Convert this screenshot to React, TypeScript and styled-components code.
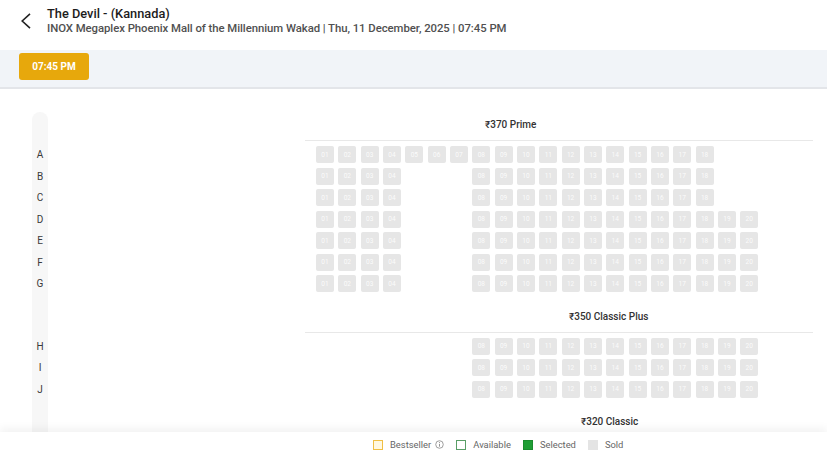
import * as React from 'react'
import styled, { createGlobalStyle } from 'styled-components'

// seat layout, one entry per block of the hall
interface IRow {
  letter: string
  seats: number[]
}
interface ISection {
  title: string
  titleIndent: number
  rows: IRow[]
}

const range = (from: number, to: number) => {
  const out: number[] = []
  for (let i = from; i <= to; i++) out.push(i)
  return out
}

const SECTIONS: ISection[] = [
  {
    title: '₹370 Prime',
    titleIndent: 180,
    rows: [
      { letter: 'A', seats: range(1, 18) },
      { letter: 'B', seats: [...range(1, 4), ...range(8, 18)] },
      { letter: 'C', seats: [...range(1, 4), ...range(8, 18)] },
      { letter: 'D', seats: [...range(1, 4), ...range(8, 20)] },
      { letter: 'E', seats: [...range(1, 4), ...range(8, 20)] },
      { letter: 'F', seats: [...range(1, 4), ...range(8, 20)] },
      { letter: 'G', seats: [...range(1, 4), ...range(8, 20)] },
    ],
  },
  {
    title: '₹350 Classic Plus',
    titleIndent: 264,
    rows: [
      { letter: 'H', seats: range(8, 20) },
      { letter: 'I', seats: range(8, 20) },
      { letter: 'J', seats: range(8, 20) },
    ],
  },
  {
    // rows of this block are below the fold
    title: '₹320 Classic',
    titleIndent: 276,
    rows: [],
  },
]

const pad = (n: number) => (n < 10 ? `0${n}` : `${n}`)

const GlobalStyle = createGlobalStyle`
  html, body {
    margin: 0;
    padding: 0;
    background: #ffffff;
  }
  body {
    font-family: Roboto, "Liberation Sans", Arial, sans-serif;
    color: #222;
  }
`

export default function App() {
  return (
    <Page>
      <GlobalStyle />
      <Header>
        <BackButton aria-label="back">
          <svg width="10" height="16" viewBox="0 0 10 16">
            <polyline points="9,0.8 1.2,8 9,15.2" fill="none" stroke="#222" strokeWidth="1.6" />
          </svg>
        </BackButton>
        <HeaderText>
          <Title>The Devil - (Kannada)</Title>
          <Subtitle>INOX Megaplex Phoenix Mall of the Millennium Wakad | Thu, 11 December, 2025 | 07:45 PM</Subtitle>
        </HeaderText>
      </Header>
      <ShowtimeBar>
        <ShowtimeButton>07:45 PM</ShowtimeButton>
      </ShowtimeBar>
      <SeatArea>
        <MapRow>
          <LetterStrip>
            {SECTIONS.map((s, si) => (
              <React.Fragment key={s.title}>
                <TitleSpacer $first={si === 0} />
                {s.rows.map(r => (
                  <Letter key={r.letter}>{r.letter}</Letter>
                ))}
              </React.Fragment>
            ))}
          </LetterStrip>
          <SeatColumn>
            {SECTIONS.map((s, si) => (
              <React.Fragment key={s.title}>
                <SectionTitle $first={si === 0}>
                  <SectionLabel $indent={s.titleIndent}>{s.title}</SectionLabel>
                </SectionTitle>
                {s.rows.map(r => (
                  <SeatRow key={r.letter}>
                    {r.seats.map(n => (
                      <Seat key={n} $col={n}>{pad(n)}</Seat>
                    ))}
                  </SeatRow>
                ))}
              </React.Fragment>
            ))}
          </SeatColumn>
        </MapRow>
      </SeatArea>
      <Legend>
        <LegendItem>
          <LegendBox $kind="bestseller" />
          <LegendText>Bestseller</LegendText>
          <InfoIcon width="9" height="9" viewBox="0 0 10 10">
            <circle cx="5" cy="5" r="4.2" fill="none" stroke="#888" strokeWidth="0.9" />
            <line x1="5" y1="4.4" x2="5" y2="7.4" stroke="#888" strokeWidth="1" />
            <circle cx="5" cy="2.9" r="0.6" fill="#888" />
          </InfoIcon>
        </LegendItem>
        <LegendItem>
          <LegendBox $kind="available" />
          <LegendText>Available</LegendText>
        </LegendItem>
        <LegendItem>
          <LegendBox $kind="selected" />
          <LegendText>Selected</LegendText>
        </LegendItem>
        <LegendItem>
          <LegendBox $kind="sold" />
          <LegendText>Sold</LegendText>
        </LegendItem>
      </Legend>
    </Page>
  )
}

const Page = styled.div`
  height: 100vh;
  display: flex;
  flex-direction: column;
  overflow: hidden;
`
const Header = styled.header`
  height: 50px;
  flex: none;
  box-sizing: border-box;
  padding: 6px 0 0 21px;
  display: flex;
  align-items: flex-start;
  background: #fff;
`
const BackButton = styled.div`
  width: 26px;
  height: 30px;
  display: flex;
  align-items: center;
`
const HeaderText = styled.div`
  display: flex;
  flex-direction: column;
`
const Title = styled.div`
  font-size: 12.8px;
  line-height: 15px;
  font-weight: 500;
  color: #1c1c1c;
`
const Subtitle = styled.div`
  font-size: 11.35px;
  line-height: 15px;
  font-weight: 500;
  color: #505050;
  letter-spacing: -0.05px;
`
const ShowtimeBar = styled.div`
  height: 39px;
  flex: none;
  box-sizing: border-box;
  padding: 3px 0 0 19px;
  background: #f1f4f8;
  border-bottom: 2px solid #e3e5e9;
`
const ShowtimeButton = styled.button`
  width: 70px;
  height: 27px;
  border: none;
  border-radius: 3px;
  background: #e7a80c;
  color: #fff;
  font-family: Roboto, "Liberation Sans", Arial, sans-serif;
  font-size: 10px;
  font-weight: 700;
  padding: 0;
`
const SeatArea = styled.div`
  flex: 1;
  overflow: hidden;
  padding-top: 23px;
`
const MapRow = styled.div`
  display: flex;
  align-items: stretch;
  padding-left: 32px;
`
const LetterStrip = styled.div`
  width: 16px;
  display: flex;
  flex-direction: column;
  background: #f7f7f7;
  border-radius: 8px 8px 0 0;
`
const TitleSpacer = styled.div<{ $first: boolean }>`
  height: ${({ $first }) => ($first ? 32 : 41)}px;
  flex: none;
`
const Letter = styled.div`
  height: 21.5px;
  flex: none;
  display: flex;
  align-items: center;
  justify-content: center;
  font-size: 10px;
  color: #3a3a3a;
`
const SeatColumn = styled.div`
  margin-left: 257px;
  width: 508px;
  display: flex;
  flex-direction: column;
`
const SectionTitle = styled.div<{ $first: boolean }>`
  padding-top: ${({ $first }) => ($first ? 6 : 15)}px;
  padding-bottom: 8px;
  margin-bottom: 3px;
  border-bottom: 1px solid #e8e8e8;
  flex: none;
`
const SectionLabel = styled.div<{ $indent: number }>`
  padding-left: ${({ $indent }) => $indent}px;
  font-size: 10px;
  line-height: 14px;
  font-weight: 500;
  color: #333;
`
const SeatRow = styled.div`
  height: 21.5px;
  flex: none;
  display: grid;
  grid-template-columns: repeat(20, 18px);
  column-gap: 4.33px;
  align-items: center;
  padding-left: 11px;
`
const Seat = styled.div<{ $col: number }>`
  grid-column: ${({ $col }) => $col};
  grid-row: 1;
  height: 17px;
  border-radius: 2px;
  background: #e6e6e6;
  color: #fbfbfb;
  font-size: 6.5px;
  display: flex;
  align-items: center;
  justify-content: center;
`
const Legend = styled.footer`
  height: 22px;
  flex: none;
  box-sizing: border-box;
  padding: 3px 0 0 373px;
  display: flex;
  align-items: center;
  background: #fff;
  box-shadow: 0 -4px 8px rgba(0, 0, 0, 0.05);
  position: relative;
`
const LegendItem = styled.div`
  display: flex;
  align-items: center;
  margin-right: 12px;
`
const legendColors = {
  bestseller: { bg: '#fff8e1', border: '#f0bf45' },
  available: { bg: '#ffffff', border: '#5a9e67' },
  selected: { bg: '#1f9e35', border: '#1a8c2e' },
  sold: { bg: '#e4e4e4', border: '#e4e4e4' },
}
const LegendBox = styled.span<{ $kind: keyof typeof legendColors }>`
  width: 10px;
  height: 10px;
  box-sizing: border-box;
  background: ${({ $kind }) => legendColors[$kind].bg};
  border: ${({ $kind }) => ($kind === 'bestseller' ? 1.5 : 1)}px solid ${({ $kind }) => legendColors[$kind].border};
  margin-right: 7px;
`
const LegendText = styled.span`
  font-size: 9.4px;
  color: #666;
`
const InfoIcon = styled.svg`
  margin-left: 4px;
`
